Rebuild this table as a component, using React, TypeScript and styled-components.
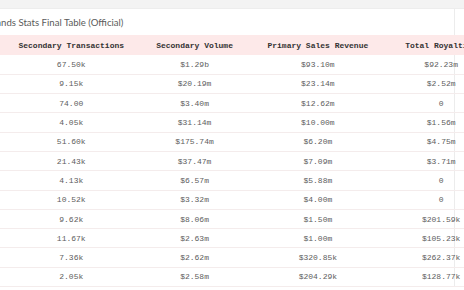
import React from "react"
import styled, { createGlobalStyle } from "styled-components"

const GlobalStyle = createGlobalStyle`
    html, body {
        margin: 0;
        padding: 0;
        background: #ffffff;
    }
`

const Viewport = styled.div`
    width: 464px;
    height: 290px;
    overflow: hidden;
    background: #ffffff;
`

const TopBand = styled.div`
    height: 8px;
    background: #f3f3f3;
    border-bottom: 1px solid #ededed;
`

const Card = styled.div`
    margin-left: -113.7px;
    width: 568px;
    border-right: 1px solid #ececec;
`

const Title = styled.div`
    height: 26px;
    display: flex;
    align-items: center;
    padding-left: 100.5px;
    padding-top: 1px;
    box-sizing: border-box;
    font-family: Lato, "Liberation Sans", sans-serif;
    font-size: 9.6px;
    color: #5a5a5a;
    white-space: nowrap;
`

const Table = styled.table`
    border-collapse: collapse;
    table-layout: fixed;
    width: ${5 * 123.3}px;
    font-family: "Liberation Mono", "DejaVu Sans Mono", monospace;
    font-size: 8px;
`

const HeadCell = styled.th`
    width: 123.3px;
    height: 20px;
    padding: 0;
    background: #fde9e9;
    color: #333333;
    font-weight: bold;
    text-align: center;
    white-space: nowrap;
`

const Cell = styled.td`
    height: 19.3px;
    box-sizing: border-box;
    padding: 0;
    border-bottom: 1px solid #f4ecec;
    color: #606060;
    text-align: center;
    white-space: nowrap;
`

const columns = ["Brand", "Secondary Transactions", "Secondary Volume", "Primary Sales Revenue", "Total Royalties"]

const rows = [
    ["67.50k", "$1.29b", "$93.10m", "$92.23m"],
    ["9.15k", "$20.19m", "$23.14m", "$2.52m"],
    ["74.00", "$3.40m", "$12.62m", "0"],
    ["4.05k", "$31.14m", "$10.00m", "$1.56m"],
    ["51.60k", "$175.74m", "$6.20m", "$4.75m"],
    ["21.43k", "$37.47m", "$7.09m", "$3.71m"],
    ["4.13k", "$6.57m", "$5.88m", "0"],
    ["10.52k", "$3.32m", "$4.00m", "0"],
    ["9.62k", "$8.06m", "$1.50m", "$201.59k"],
    ["11.67k", "$2.63m", "$1.00m", "$105.23k"],
    ["7.36k", "$2.62m", "$320.85k", "$262.37k"],
    ["2.05k", "$2.58m", "$204.29k", "$128.77k"],
]

export default function App() {
    return (
        <Viewport>
            <GlobalStyle />
            <TopBand />
            <Card>
                <Title>Brands Stats Final Table (Official)</Title>
                <Table>
                    <thead>
                        <tr>
                            {columns.map(c => <HeadCell key={c}>{c}</HeadCell>)}
                        </tr>
                    </thead>
                    <tbody>
                        {rows.map((r, i) => (
                            <tr key={i}>
                                <Cell>#{i + 1}</Cell>
                                {r.map((v, j) => <Cell key={j}>{v}</Cell>)}
                            </tr>
                        ))}
                    </tbody>
                </Table>
            </Card>
        </Viewport>
    )
}
